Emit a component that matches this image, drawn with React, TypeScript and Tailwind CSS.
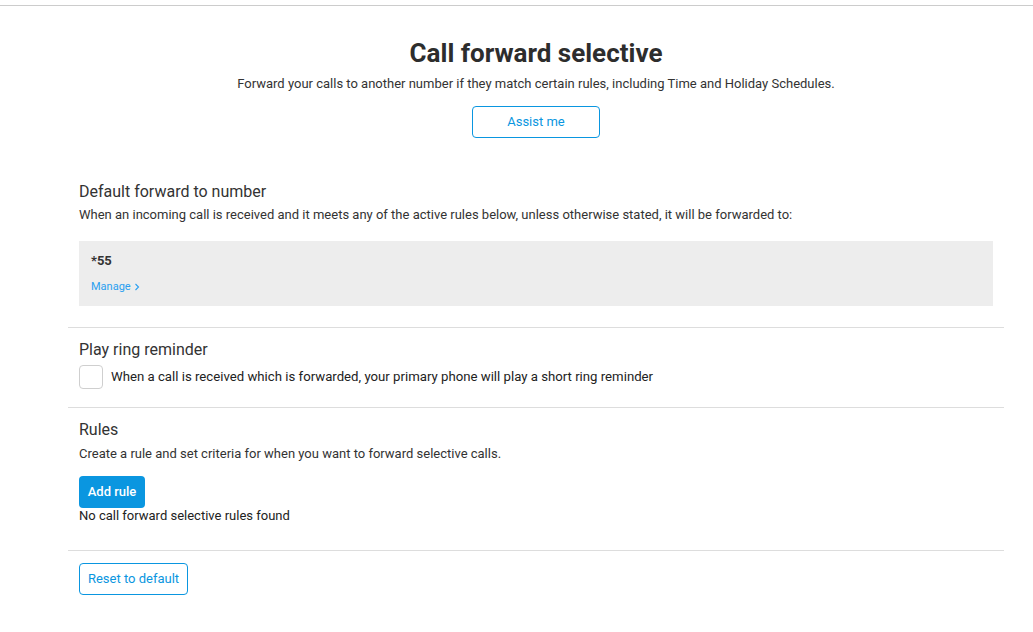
export default function App() {
  return (
    <div className="min-h-[632px] bg-white font-['Roboto',sans-serif] text-[#333]">
      <div className="h-[5px]" />
      <div className="border-t border-[#cccccc]" />
      <div className="mx-[68px] w-[936px]">
        <div className="flex flex-col items-center pt-[29px]">
          <h1 className="text-[26px] font-bold leading-[36px] text-[#2d2d2d]">Call forward selective</h1>
          <p className="mt-[4px] text-[13px] leading-[18px] text-[#333]">
            Forward your calls to another number if they match certain rules, including Time and Holiday Schedules.
          </p>
          <button className="mt-[13px] h-[32px] w-[128px] rounded-[4px] border border-[#0a96e0] text-[13px] text-[#0a96e0]">
            Assist me
          </button>
        </div>

        <div className="px-[11px] pt-[43px] pb-[21px]">
          <h2 className="text-[16px] leading-[22px] text-[#333]">Default forward to number</h2>
          <p className="mt-[3px] text-[13px] leading-[18px]">
            When an incoming call is received and it meets any of the active rules below, unless otherwise stated, it will be forwarded to:
          </p>
          <div className="mt-[17px] h-[65px] bg-[#ededed] px-[12px] pt-[11px]">
            <p className="text-[13px] font-bold leading-[18px] text-[#333]">*55</p>
            <p className="mt-[10px] flex items-center gap-[3px] text-[11px] leading-[14px] text-[#2a9ff0]">
              Manage
              <svg width="6" height="8" viewBox="0 0 6 8" fill="none" stroke="currentColor" strokeWidth="1.1">
                <path d="M1.5 1 L4.5 4 L1.5 7" />
              </svg>
            </p>
          </div>
        </div>

        <div className="border-t border-[#dddddd] px-[11px] pt-[11px] pb-[18px]">
          <h2 className="text-[16px] leading-[22px] text-[#333]">Play ring reminder</h2>
          <label className="mt-[4px] flex items-center gap-[8px]">
            <span className="h-[24px] w-[24px] rounded-[4px] border border-[#cfcfcf] bg-white" />
            <span className="text-[13.2px] leading-[18px] text-[#222]">
              When a call is received which is forwarded, your primary phone will play a short ring reminder
            </span>
          </label>
        </div>

        <div className="border-t border-[#dddddd] px-[11px] pt-[11px] pb-[26px]">
          <h2 className="text-[16px] leading-[22px] text-[#333]">Rules</h2>
          <p className="mt-[4px] text-[13px] leading-[18px]">
            Create a rule and set criteria for when you want to forward selective calls.
          </p>
          <button className="mt-[13px] h-[32px] w-[66px] rounded-[4px] bg-[#0a96e0] text-[13px] font-medium text-white">
            Add rule
          </button>
          <p className="text-[13px] leading-[16px] text-[#222]">No call forward selective rules found</p>
        </div>

        <div className="border-t border-[#dddddd] px-[11px] pt-[12px]">
          <button className="h-[32px] w-[109px] rounded-[4px] border border-[#0a96e0] text-[13px] text-[#0a96e0]">
            Reset to default
          </button>
        </div>
      </div>
    </div>
  )
}
